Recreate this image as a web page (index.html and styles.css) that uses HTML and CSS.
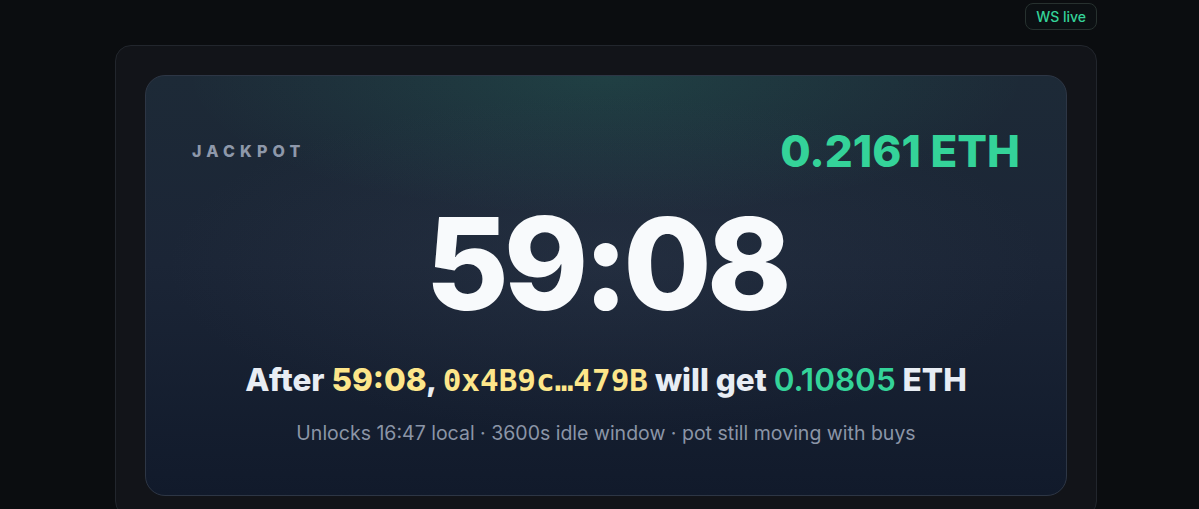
FILE: index.html
```html
<!DOCTYPE html>
<html lang="en">
<head>
    <meta charset="UTF-8">
    <meta name="viewport" content="width=device-width, initial-scale=1.0">
    <title>Jackpot</title>
    <link rel="stylesheet" href="styles.css">
</head>
<body>
    <div class="page">
        <div class="topbar">
            <span class="ws-badge">WS live</span>
        </div>
        <div class="panel">
            <div class="jackpot-card">
                <div class="jackpot-head">
                    <span class="jackpot-label">JACKPOT</span>
                    <span class="jackpot-pot">0.2161 ETH</span>
                </div>
                <div class="countdown">59:08</div>
                <div class="payout">
                    After <span class="hl-time">59:08</span>, <span class="hl-addr">0x4B9c…479B</span> will get <span class="hl-eth">0.10805</span> ETH
                </div>
                <div class="unlock-note">Unlocks 16:47 local · 3600s idle window · pot still moving with buys</div>
            </div>
        </div>
    </div>
</body>
</html>
```

FILE: styles.css
```css
/* Base */
body {
    margin: 0;
    padding: 0;
    background: #0b0d10;
    font-family: Inter, "Noto Sans", Arial, sans-serif;
    color: #e2e8f0;
    height: 100vh;
    overflow: hidden;
}
.page {
    width: 982px;
    margin-left: 115px;
}
.topbar {
    display: flex;
    justify-content: flex-end;
    padding-top: 3px;
    margin-bottom: 15px;
}
.ws-badge {
    font-size: 14px;
    line-height: 17px;
    font-weight: 500;
    color: #34d399;
    padding: 4px 10px;
    border: 1px solid #27312f;
    border-radius: 8px;
    background: #0c1013;
}
.panel {
    background: #121419;
    border: 1px solid #22262d;
    border-radius: 16px;
    padding: 29px 29px 20px;
}
.jackpot-card {
    display: flex;
    flex-direction: column;
    align-items: center;
    border: 1px solid #2d3645;
    border-radius: 20px;
    padding: 51px 46px 49px;
    background:
        radial-gradient(ellipse 420px 140px at 50% 0%, rgba(52, 211, 153, 0.13), rgba(52, 211, 153, 0) 100%),
        radial-gradient(ellipse 440px 170px at 50% 45%, rgba(71, 85, 105, 0.18), rgba(71, 85, 105, 0) 100%),
        linear-gradient(180deg, #1d2a37 0%, #1b2536 45%, #111a2b 100%);
}
.jackpot-head {
    align-self: stretch;
    display: flex;
    justify-content: space-between;
    align-items: center;
}
.jackpot-label {
    font-size: 16px;
    font-weight: 800;
    letter-spacing: 0.32em;
    color: #8e98aa;
}
.jackpot-pot {
    font-size: 44px;
    line-height: 48px;
    font-weight: 800;
    color: #34d399;
}
.countdown {
    margin-top: 25px;
    font-size: 128px;
    line-height: 1;
    font-weight: 800;
    letter-spacing: -0.04em;
    color: #f8fafc;
}
.payout {
    margin-top: 32px;
    font-size: 31.5px;
    line-height: 40px;
    font-weight: 800;
    color: #e8edf4;
}
.hl-time {
    color: #fde68a;
}
.hl-addr {
    color: #fde68a;
    font-family: "DejaVu Sans Mono", "Liberation Mono", monospace;
    font-weight: 700;
    font-size: 31px;
}
.hl-eth {
    color: #34d399;
    font-weight: 600;
}
.unlock-note {
    margin-top: 20px;
    font-size: 19.5px;
    line-height: 26px;
    color: #8b95a7;
}
```
